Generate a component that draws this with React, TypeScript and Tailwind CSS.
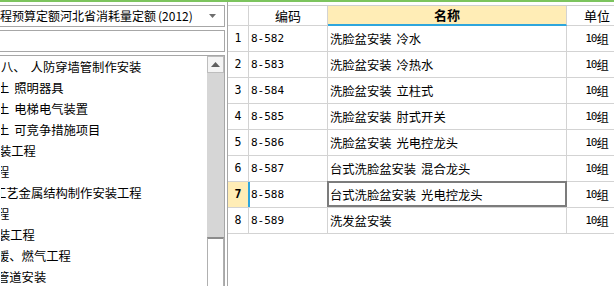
import React from "react";

const rows = [
  ["1", "8-582", "洗脸盆安装 冷水"],
  ["2", "8-583", "洗脸盆安装 冷热水"],
  ["3", "8-584", "洗脸盆安装 立柱式"],
  ["4", "8-585", "洗脸盆安装 肘式开关"],
  ["5", "8-586", "洗脸盆安装 光电控龙头"],
  ["6", "8-587", "台式洗脸盆安装 混合龙头"],
  ["7", "8-588", "台式洗脸盆安装 光电控龙头"],
  ["8", "8-589", "洗发盆安装"],
];

const tree: { a: string; b?: string; cls: string }[] = [
  { a: "八、", b: "人防穿墙管制作安装", cls: "ml-0" },
  { a: "土", b: "照明器具", cls: "-ml-[4px]" },
  { a: "土", b: "电梯电气装置", cls: "-ml-[4px]" },
  { a: "土", b: "可竞争措施项目", cls: "-ml-[4px]" },
  { a: "装工程", cls: "-ml-[2px]" },
  { a: "程", cls: "-ml-[4px]" },
  { a: "工艺金属结构制作安装工程", cls: "-ml-[7px]" },
  { a: "程", cls: "-ml-[4px]" },
  { a: "装工程", cls: "-ml-[3px]" },
  { a: "暖、燃气工程", cls: "-ml-[4px]" },
  { a: "管道安装", cls: "-ml-[4px]" },
];

const cjk = "font-['SimSun','Noto_Sans_CJK_SC',sans-serif]";
const mono = "font-['DejaVu_Sans_Mono','Noto_Sans_CJK_SC',monospace]";

export default function App() {
  return (
    <div className={`w-[614px] h-[286px] overflow-hidden bg-white text-black ${cjk}`}>
      <div className="h-[2px] bg-[#7cc45e]" />
      <div className="flex h-[284px]">
        {/* Left panel */}
        <div className="w-[227px] shrink-0 flex flex-col pt-[3px] overflow-hidden">
          <div className="-ml-[2px] w-[227px] h-[22px] border border-[#a7a7a7] bg-white flex items-center overflow-hidden shrink-0">
            <div className="flex-1 overflow-hidden whitespace-nowrap flex items-center">
              <span className="ml-[1px] text-[12px] leading-[20px]">程预算定额河北省消耗量定额</span>
              <span className="ml-[2px] text-[12px] leading-[20px]">(2012)</span>
            </div>
            <svg width="7" height="4" viewBox="0 0 7 4" className="mr-[8px] shrink-0">
              <polygon points="0,0 7,0 3.5,4" fill="#6e6e6e" />
            </svg>
          </div>
          <div className="-ml-[2px] mt-[3px] w-[227px] h-[22px] border border-[#a7a7a7] bg-white shrink-0" />
          <div className="-ml-[2px] mt-[3px] w-[227px] flex-1 border-t border-r border-l border-[#a7a7a7] flex overflow-hidden">
            <div className="flex-1 overflow-hidden pt-[1px] pl-[2px]">
              {tree.map((it, i) => (
                <div key={i} className="h-[21px] flex items-center whitespace-nowrap overflow-hidden text-[12.3px]">
                  <span className={it.cls}>{it.a}</span>
                  {it.b && <span className="ml-[5px]">{it.b}</span>}
                </div>
              ))}
            </div>
            <div className="w-[17px] shrink-0 flex flex-col bg-[#d6d6d6]">
              <div className="h-[17px] border border-[#bdbdbd] bg-[#f4f4f4] flex items-center justify-center">
                <svg width="9" height="5" viewBox="0 0 9 5">
                  <polygon points="0,5 9,5 4.5,0" fill="#5f5f5f" />
                </svg>
              </div>
              <div className="h-[164px]" />
              <div className="flex-1 bg-white border-t-2 border-t-[#8c8c8c] border-l border-r border-[#b0b0b0]" />
            </div>
          </div>
        </div>
        {/* Right table */}
        <div className="flex-1 border-l border-[#a7a7a7] pt-[3px] relative overflow-hidden">
          <div className="w-[400px] border-t border-[#cfcfcf]">
            {/* header */}
            <div className="flex h-[20px] text-[13px]">
              <div className="w-[21px] border-r border-b border-[#d3d3d3]" />
              <div className="w-[79px] border-r border-b border-[#d3d3d3] flex items-center justify-center">编码</div>
              <div className="w-[239px] border-r border-[#d3d3d3] bg-[#ffedb6] border-b-2 border-b-[#2fa6dc] flex items-center justify-center font-bold">名称</div>
              <div className="w-[60px] border-b border-[#d3d3d3] flex items-center justify-center">单位</div>
            </div>
            {rows.map(([n, code, name]) => {
              const sel = n === "7";
              const [p1, p2] = name.split(" ");
              return (
                <div key={n} className="flex h-[26px] text-[12.3px]">
                  <div
                    className={`w-[21px] border-r border-b border-[#d3d3d3] flex items-center justify-center pt-[1px] ${mono} text-[11.5px] ${
                      sel ? "bg-[#ffedb6] font-bold" : ""
                    }`}
                  >
                    {n}
                  </div>
                  <div className={`w-[79px] border-r border-b border-[#d3d3d3] flex items-center pl-[1px] pt-[1px] relative ${mono} text-[11px]`}>
                    {sel && <div className="absolute -left-[1px] top-0 bottom-0 w-[2px] bg-[#2fa6dc]" />}
                    <span className="ml-[1px]">{code}</span>
                  </div>
                  <div className="w-[239px] border-r border-b border-[#d3d3d3] flex items-center pl-[2px] pt-[1px] relative whitespace-nowrap">
                    {sel && <div className="absolute -left-[1px] -top-[1px] -right-[1px] bottom-0 border-2 border-[#7c7c7c]" />}
                    <span>{p1}</span>
                    {p2 && <span className="ml-[5px]">{p2}</span>}
                  </div>
                  <div className="w-[60px] border-b border-[#d3d3d3] flex items-center justify-center pt-[1px]">
                    <span className={`${mono} text-[11px] tracking-[-1px]`}>10</span>
                    <span>组</span>
                  </div>
                </div>
              );
            })}
          </div>
        </div>
      </div>
    </div>
  );
}
